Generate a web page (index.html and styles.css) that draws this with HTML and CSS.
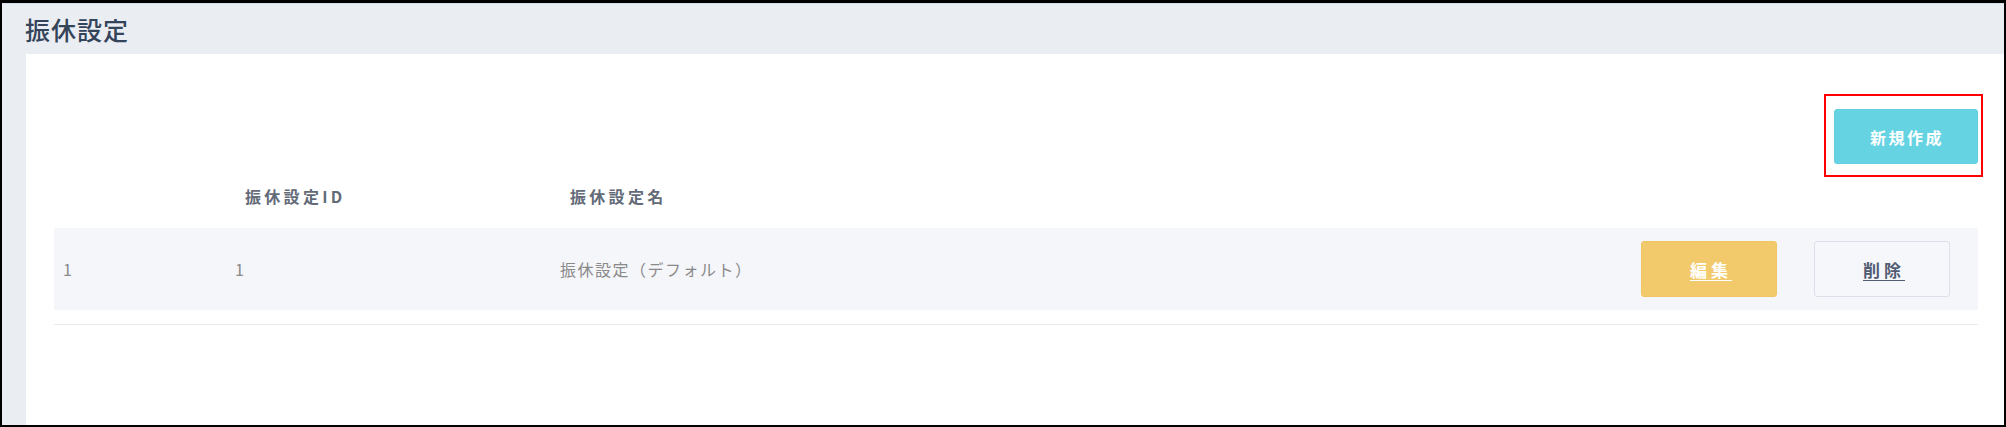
FILE: index.html
```html
<!DOCTYPE html>
<html lang="ja">
<head>
<meta charset="utf-8">
<title>振休設定</title>
<link rel="stylesheet" href="styles.css">
</head>
<body>
<div class="frame">
  <header class="page-head">
    <h1 class="title">振休設定</h1>
  </header>
  <main class="panel">
    <div class="toolbar">
      <div class="new-wrap">
        <button class="btn btn-new" type="button">新規作成</button>
        <span class="highlight"></span>
      </div>
    </div>
    <div class="table">
      <div class="thead">
        <div class="th"></div>
        <div class="th">振休設定ID</div>
        <div class="th">振休設定名</div>
        <div class="th"></div>
      </div>
      <div class="row">
        <div class="td">1</div>
        <div class="td">1</div>
        <div class="td">振休設定（デフォルト）</div>
        <div class="td actions">
          <a class="btn btn-edit" href="#">編集</a>
          <a class="btn btn-delete" href="#">削除</a>
        </div>
      </div>
      <div class="table-end"></div>
    </div>
  </main>
</div>
</body>
</html>
```
FILE: styles.css
```css
* { box-sizing: border-box; }
html, body { margin: 0; padding: 0; }
body {
  width: 2006px;
  height: 427px;
  overflow: hidden;
  font-family: "Noto Sans CJK JP", "Noto Sans", sans-serif;
  background: #000;
}
.frame {
  width: 2006px;
  height: 427px;
  border-style: solid;
  border-color: #000;
  border-width: 3px 2px 2px 2px;
  background: #eaedf1;
  display: flex;
  flex-direction: column;
}
.page-head {
  height: 51px;
  border-top: 1px solid #d7dfe8;
  display: flex;
  align-items: center;
  padding-left: 23px;
}
.title {
  margin: 0;
  font-size: 25px;
  line-height: 1;
  font-weight: 500;
  letter-spacing: 1px;
  color: #34445a;
}
.panel {
  flex: 1;
  margin-left: 24px;
  background: #fff;
  padding: 0 26px 0 28px;
}
.toolbar {
  display: flex;
  justify-content: flex-end;
  padding-top: 55px;
}
.new-wrap { position: relative; }
.highlight {
  position: absolute;
  left: -10px;
  top: -15px;
  right: -5px;
  bottom: -13px;
  border: 2px solid #ff0000;
  pointer-events: none;
}
.btn {
  display: flex;
  align-items: center;
  justify-content: center;
  font-family: inherit;
  font-weight: 700;
  border-radius: 3px;
  line-height: 1;
}
.btn-new {
  width: 144px;
  height: 55px;
  border: 1px solid #62d0e0;
  background: #66d3e3;
  color: #fff;
  font-size: 16px;
  letter-spacing: 2.5px;
  padding: 0 0 0 2px;
}
.thead, .row {
  display: grid;
  grid-template-columns: 172px 325px 1fr auto;
  align-items: center;
}
.thead { height: 64px; }
.th {
  padding-left: 19px;
  font-size: 16px;
  font-weight: 700;
  letter-spacing: 3.3px;
  color: #636b78;
}
.row {
  height: 82px;
  background: #f5f6fa;
}
.td {
  padding-left: 9px;
  font-size: 16px;
  letter-spacing: 1.5px;
  color: #8a8a8a;
}
.td.actions {
  display: flex;
  gap: 37px;
  padding-left: 0;
  padding-right: 28px;
}
.btn-edit, .btn-delete {
  width: 136px;
  height: 56px;
  font-size: 17px;
  letter-spacing: 4px;
  padding-left: 4px;
  text-decoration: underline;
  text-underline-offset: 3px;
}
.btn-edit {
  background: #f2ca6b;
  border: 1px solid #efc663;
  color: #fff;
}
.btn-delete {
  background: #f6f7fb;
  border: 1px solid #dde0ea;
  color: #525c72;
}
.table-end {
  margin-top: 14px;
  height: 1px;
  background: #e8ebee;
}
```
